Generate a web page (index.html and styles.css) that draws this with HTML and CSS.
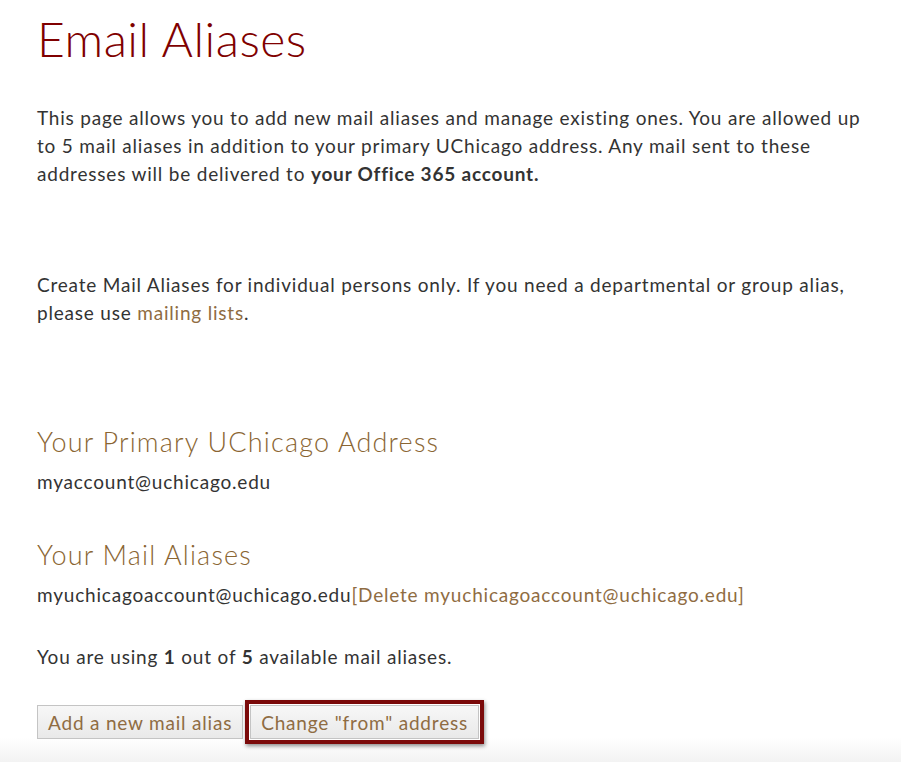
FILE: index.html
```html
<!DOCTYPE html>
<html lang="en">
<head>
<meta charset="utf-8">
<title>Email Aliases</title>
<link rel="stylesheet" href="styles.css">
</head>
<body>
<div class="page">
  <h1 class="title">Email Aliases</h1>
  <p class="intro">This page allows you to add new mail aliases and manage existing ones. You are allowed up to 5 mail aliases in addition to your primary UChicago address. Any mail sent to these addresses will be delivered to <strong>your Office 365 account.</strong></p>
  <p class="note">Create Mail Aliases for individual persons only. If you need a departmental or group alias, please use <a href="#" class="link">mailing lists</a>.</p>
  <h2 class="section first">Your Primary UChicago Address</h2>
  <p class="line">myaccount@uchicago.edu</p>
  <h2 class="section">Your Mail Aliases</h2>
  <p class="line">myuchicagoaccount@uchicago.edu<a href="#" class="link">[Delete myuchicagoaccount@uchicago.edu]</a></p>
  <p class="usage">You are using <strong>1</strong> out of <strong>5</strong> available mail aliases.</p>
  <div class="actions">
    <button class="btn">Add a new mail alias</button>
    <span class="highlight"><button class="btn">Change "from" address</button></span>
  </div>
</div>
</body>
</html>
```
FILE: styles.css
```css
html, body {
  margin: 0;
  padding: 0;
}
body {
  font-family: Lato, "Open Sans", sans-serif;
  color: #333;
  background: linear-gradient(to bottom, #fff 0, #fff 738px, #f3f3f3 762px);
  min-height: 762px;
}
.page {
  padding: 0 0 0 37px;
  width: 840px;
}
.title {
  font-weight: 300;
  font-size: 48px;
  line-height: 56px;
  letter-spacing: 0.5px;
  color: #800000;
  margin: 11px 0 0 0;
}
.intro, .note, .line, .usage {
  font-size: 19px;
  line-height: 28px;
  letter-spacing: 0.8px;
  margin: 0;
}
.intro { margin-top: 37px; }
.note { margin-top: 83px; }
.link {
  color: #8f6c42;
  text-decoration: none;
}
.section {
  font-weight: 300;
  font-size: 27px;
  line-height: 36px;
  letter-spacing: 1.2px;
  color: #8a6532;
  margin: 41px 0 8px 0;
}
.section.first { margin-top: 97px; }
.usage { margin-top: 34px; }
.actions {
  margin-top: 29px;
  display: flex;
  align-items: center;
}
.btn {
  font-family: Lato, "Open Sans", sans-serif;
  font-size: 19px;
  letter-spacing: 0.8px;
  color: #8f6c42;
  background: linear-gradient(to bottom, #f7f7f7, #e9e9e9);
  border: 1px solid #c4c4c4;
  height: 34px;
  padding: 0 10px;
  margin: 0;
  cursor: pointer;
}
.highlight {
  display: inline-flex;
  margin-left: 2px;
  border: 4px solid #7b0a0a;
  padding: 1px;
  box-shadow: 1px 2px 4px rgba(0,0,0,0.45);
}
```
